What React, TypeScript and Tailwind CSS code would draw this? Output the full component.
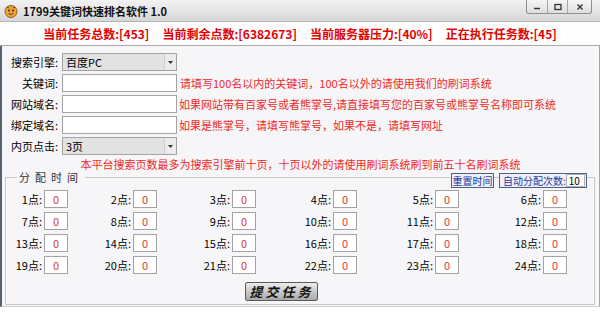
import React from "react";

const Sel = ({ value }: { value: string }) => (
  <div className="w-[115px] h-[18px] flex border border-[#a3a3a3] bg-[#e2e2e2]">
    <div className="flex-1 pl-[3px] leading-[16px] text-black">{value}</div>
    <div className="w-[12px] flex items-center justify-center bg-[#ebebeb] border-l border-[#d0d0d0]">
      <svg width="5" height="3" viewBox="0 0 5 3">
        <path d="M0 0h5L2.5 3z" fill="#333" />
      </svg>
    </div>
  </div>
);

const Inp = () => <div className="w-[115px] h-[18px] border border-[#a3a3a3] bg-white" />;

const Row = ({ label, children }: { label: string; children: React.ReactNode }) => (
  <div className="flex items-center h-[18px]">
    <div className="w-[60px] text-right pr-[4px] leading-[18px] text-black whitespace-nowrap">{label}</div>
    {children}
  </div>
);

const widths = [62, 89, 99, 101, 102, 108];

const Cell = ({ n, w }: { n: number; w: number }) => (
  <div className="flex items-center h-[18px]" style={{ width: w }}>
    <div className="flex-1 text-right pr-[2px] leading-[18px] whitespace-nowrap">{n}点:</div>
    <div className="w-[24px] h-[18px] border border-[#a3a3a3] bg-white text-center leading-[16px] text-[#d83a3a]">0</div>
  </div>
);

export default function App() {
  const rows = [0, 1, 2, 3];
  return (
    <div className="w-[600px] h-[320px] bg-white overflow-hidden font-['Noto_Sans_CJK_SC',sans-serif] text-[11px] text-black">
      {/* title bar */}
      <div className="h-[22px] flex items-center bg-linear-to-b from-[#f2f2f2] to-[#d7d7d7] border-b border-[#b4b4b4]">
        <svg className="ml-[4px]" width="14" height="14" viewBox="0 0 14 14">
          <circle cx="7" cy="7.5" r="6" fill="#e9a53a" stroke="#9a5a18" strokeWidth="1" />
          <circle cx="5" cy="6.5" r="1" fill="#3a2a10" />
          <circle cx="9" cy="6.5" r="1" fill="#3a2a10" />
          <path d="M4.5 9.5q2.5 2 5 0" stroke="#7a3a10" strokeWidth="1" fill="none" />
          <path d="M3 3l2 1M11 3l-2 1" stroke="#7a3a10" strokeWidth="1" />
        </svg>
        <div className="ml-[5px] font-bold text-[11px] leading-[14px] text-[#111]">1799关键词快速排名软件 1.0</div>
        <div className="ml-auto mr-[8px] self-start flex h-[14px] border border-t-0 border-[#8e8e8e] rounded-b-[3px] bg-linear-to-b from-[#f6f6f6] to-[#dedede]">
          <div className="w-[21px] flex items-center justify-center border-r border-[#a8a8a8]">
            <svg width="8" height="8" viewBox="0 0 8 8"><path d="M1 5.5h6" stroke="#333" strokeWidth="1.5" /></svg>
          </div>
          <div className="w-[20px] flex items-center justify-center border-r border-[#a8a8a8]">
            <svg width="8" height="8" viewBox="0 0 8 8"><rect x="1" y="1.5" width="6" height="5" stroke="#333" strokeWidth="1.3" fill="none" /></svg>
          </div>
          <div className="w-[23px] flex items-center justify-center">
            <svg width="8" height="8" viewBox="0 0 8 8"><path d="M1.5 1.5l5 5M6.5 1.5l-5 5" stroke="#333" strokeWidth="1.4" /></svg>
          </div>
        </div>
      </div>

      {/* status */}
      <div className="h-[24px] flex items-center justify-center gap-[13px] text-[12px] font-bold text-[#e40000] border-b border-[#a9a9a9] bg-[#fdfdfd] whitespace-nowrap">
        <span>当前任务总数:[453]</span>
        <span>当前剩余点数:[6382673]</span>
        <span>当前服务器压力:[40%]</span>
        <span>正在执行任务数:[45]</span>
      </div>

      {/* panel */}
      <div className="h-[261px] border-l-2 border-l-[#56626e] border-r border-r-[#a5a5a5] border-b border-b-[#d0d0d0] bg-[#f6f6f8] pt-[7px] flex flex-col">
        <div className="flex flex-col gap-[3px]">
          <Row label="搜索引擎:">
            <Sel value="百度PC" />
          </Row>
          <Row label="关键词:">
            <Inp />
            <span className="ml-[3px] text-[#f02828] whitespace-nowrap leading-[18px]">请填写100名以内的关键词，100名以外的请使用我们的刷词系统</span>
          </Row>
          <Row label="网站域名:">
            <Inp />
            <span className="ml-[2px] text-[#f02828] whitespace-nowrap leading-[18px]">如果网站带有百家号或者熊掌号,请直接填写您的百家号或熊掌号名称即可系统</span>
          </Row>
          <Row label="绑定域名:">
            <Inp />
            <span className="ml-[2px] text-[#f02828] whitespace-nowrap leading-[18px]">如果是熊掌号，请填写熊掌号，如果不是，请填写网址</span>
          </Row>
          <Row label="内页点击:">
            <Sel value="3页" />
          </Row>
        </div>

        <div className="mt-[3px] h-[13px] leading-[13px] text-center text-[#f02828] whitespace-nowrap">
          本平台搜索页数最多为搜索引擎前十页，十页以外的请使用刷词系统刷到前五十名刷词系统
        </div>

        {/* group */}
        <div className="relative mt-[6px] ml-[3px] mr-[4px] h-[128px] border border-[#c9c9c9] pt-[12px]">
          <div className="absolute top-[-8px] left-[11px] px-[2px] bg-[#f6f6f8] text-[#333] tracking-[5px] leading-[14px]">分配时间</div>
          <div className="absolute top-[-5px] right-[7px] flex gap-[5px]">
            <div className="w-[43px] h-[15px] border border-[#4f5f8a] bg-[#eef0f6] text-[#1f3aa8] text-[10px] text-center leading-[13px] whitespace-nowrap">重置时间</div>
            <div className="w-[88px] h-[15px] border border-[#4f5f8a] bg-[#eef0f6] flex items-center pl-[3px]">
              <span className="text-[#1f3aa8] text-[10px] leading-[13px] whitespace-nowrap">自动分配次数:</span>
              <div className="ml-auto mr-[1px] w-[20px] h-[13px] bg-white border border-[#b0b0b0] text-[10px] leading-[11px] pl-[2px]">10</div>
            </div>
          </div>
          <div className="flex flex-col gap-[4px]">
            {rows.map((r) => (
              <div key={r} className="flex">
                {widths.map((w, i) => (
                  <Cell key={i} n={r * 6 + i + 1} w={w} />
                ))}
              </div>
            ))}
          </div>
          <div className="mt-[8px] pl-[239px]">
            <div className="w-[73px] h-[19px] border border-[#5a5a5a] rounded-[2px] bg-linear-to-b from-[#ececec] to-[#a9a9a9] text-center leading-[17px] text-[13px] font-bold italic tracking-[3px] text-[#111]">
              提交任务
            </div>
          </div>
        </div>
      </div>
    </div>
  );
}
